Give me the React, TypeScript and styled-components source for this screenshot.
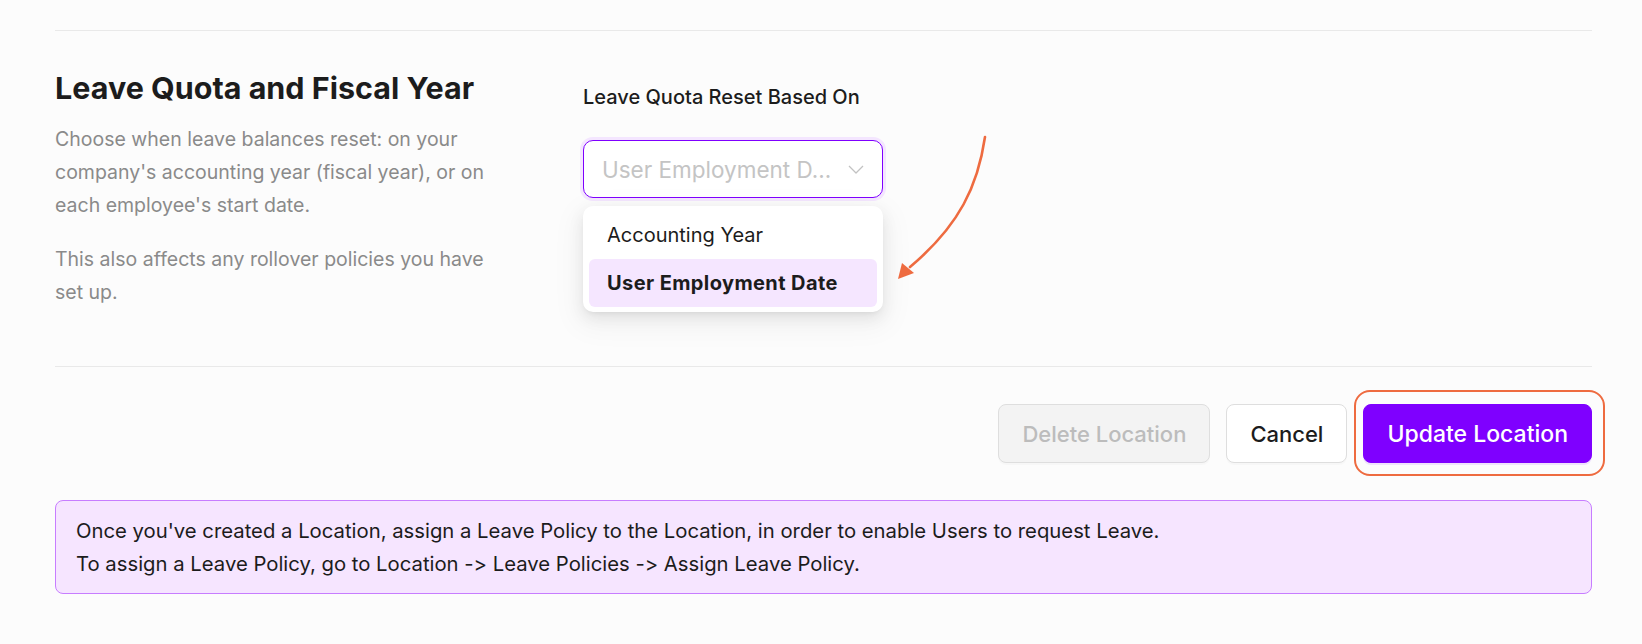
import React from 'react'
import styled, { createGlobalStyle } from 'styled-components'

const GlobalStyle = createGlobalStyle`
  body {
    margin: 0;
    background: #fcfcfc;
    font-family: Inter, 'Noto Sans', sans-serif;
    font-feature-settings: 'calt' 0, 'liga' 0;
    color: #1c1c1c;
  }
`

const ChevronDown = () => (
  <svg width='16' height='9' viewBox='0 0 16 9' fill='none'>
    <path d='M1 1 L8 8 L15 1' stroke='#c2c2c2' strokeWidth='1.3' strokeLinejoin='round' />
  </svg>
)

const CurvedArrow = () => (
  <Svg_Arrow width='110' height='165' viewBox='0 0 110 165' fill='none'>
    <path d='M102 11 C95 59 77 99 27 141' stroke='#ee6b40' strokeWidth='2.6' strokeLinecap='round' />
    <polygon points='15,153 19,137 31,147' fill='#ee6b40' />
  </Svg_Arrow>
)

export default function App() {
  return (
    <>
      <GlobalStyle />
      <Div_Page>
        <Hr_Divider />
        <Section_Row>
          <div>
            <H2_Title>Leave Quota and Fiscal Year</H2_Title>
            <P_Description>
              Choose when leave balances reset: on your company's accounting year (fiscal year), or on
              each employee's start date.
            </P_Description>
            <P_Description>This also affects any rollover policies you have set up.</P_Description>
          </div>
          <Div_Field>
            <Label_Field>Leave Quota Reset Based On</Label_Field>
            <Div_Select>
              <Span_Placeholder>User Employment D...</Span_Placeholder>
              <ChevronDown />
            </Div_Select>
            <Ul_Menu>
              <Li_Option>Accounting Year</Li_Option>
              <Li_Option selected>User Employment Date</Li_Option>
            </Ul_Menu>
            <CurvedArrow />
          </Div_Field>
        </Section_Row>
        <Hr_Divider />
        <Div_Footer>
          <Button_Action variant='disabled'>Delete Location</Button_Action>
          <Button_Action variant='default'>Cancel</Button_Action>
          <Div_Highlight>
            <Button_Action variant='primary'>Update Location</Button_Action>
          </Div_Highlight>
        </Div_Footer>
        <Div_Notice>
          Once you've created a Location, assign a Leave Policy to the Location, in order to enable Users to
          request Leave.
          <br />
          To assign a Leave Policy, go to Location -&gt; Leave Policies -&gt; Assign Leave Policy.
        </Div_Notice>
      </Div_Page>
    </>
  )
}

const Div_Page = styled.div`
  padding: 30px 50px 0 55px;
`

const Hr_Divider = styled.hr`
  margin: 0;
  border: none;
  border-top: 1px solid #e9e9e9;
`

const Section_Row = styled.section`
  display: grid;
  grid-template-columns: 452px 1fr;
  column-gap: 76px;
  padding: 40px 0 57px;
`

const H2_Title = styled.h2`
  margin: 0;
  font-size: 30.5px;
  line-height: 34px;
  font-weight: 700;
  color: #1c1c1c;
`

const P_Description = styled.p`
  margin: 18px 0 0;
  font-size: 19.5px;
  line-height: 33px;
  color: #8a8a8a;
  & + & {
    margin-top: 21px;
  }
`

const Div_Field = styled.div`
  position: relative;
  padding-top: 14px;
`

const Label_Field = styled.label`
  display: block;
  font-size: 20px;
  line-height: 24px;
  font-weight: 500;
  color: #1c1c1c;
`

const Div_Select = styled.div`
  box-sizing: border-box;
  width: 300px;
  height: 58px;
  margin-top: 31px;
  padding: 0 18px 0 18px;
  display: flex;
  align-items: center;
  justify-content: space-between;
  background: #fff;
  border: 1px solid #7f00ff;
  border-radius: 10px;
  box-shadow: 0 0 0 3px #f4e6ff;
`

const Span_Placeholder = styled.span`
  font-size: 22.5px;
  color: #c4c4c4;
`

const Ul_Menu = styled.ul`
  position: absolute;
  top: 135px;
  left: 0;
  box-sizing: border-box;
  width: 300px;
  margin: 0;
  padding: 5px 6px;
  list-style: none;
  background: #fff;
  border-radius: 10px;
  box-shadow: 0 6px 16px rgba(0, 0, 0, 0.08), 0 3px 6px -4px rgba(0, 0, 0, 0.12), 0 9px 28px 8px rgba(0, 0, 0, 0.04);
`

const Li_Option = styled.li<{ selected?: boolean }>`
  height: 48px;
  display: flex;
  align-items: center;
  padding: 0 18px;
  border-radius: 6px;
  font-size: 20px;
  font-weight: ${p => (p.selected ? 700 : 400)};
  letter-spacing: ${p => (p.selected ? '0.4px' : '0')};
  background: ${p => (p.selected ? '#f5e6ff' : 'transparent')};
  color: #1c1c1c;
`

const Svg_Arrow = styled.svg`
  position: absolute;
  left: 300px;
  top: 55px;
`

const Div_Footer = styled.div`
  display: flex;
  justify-content: flex-end;
  align-items: center;
  gap: 16px;
  padding: 37px 0 37px;
`

const Button_Action = styled.button<{ variant: 'disabled' | 'default' | 'primary' }>`
  height: 59px;
  padding: 0 23px;
  border-radius: 8px;
  font-family: inherit;
  font-feature-settings: 'calt' 0;
  font-size: ${p => (p.variant === 'primary' ? '23px' : '22px')};
  font-weight: 500;
  cursor: pointer;
  border: 1px solid
    ${p => (p.variant === 'primary' ? '#7f00ff' : '#dedede')};
  background: ${p => (p.variant === 'primary' ? '#7f00ff' : p.variant === 'disabled' ? '#f3f3f3' : '#fff')};
  color: ${p => (p.variant === 'primary' ? '#fff' : p.variant === 'disabled' ? '#bcbcbc' : '#1c1c1c')};
  box-shadow: ${p => (p.variant === 'primary' ? '0 2px 0 rgba(127, 0, 255, 0.1)' : '0 2px 0 rgba(0, 0, 0, 0.02)')};
`

const Div_Highlight = styled.div`
  position: relative;
  display: flex;
  &::after {
    content: '';
    position: absolute;
    top: -14px;
    bottom: -13px;
    left: -9px;
    right: -13px;
    border: 2.5px solid #ee6b40;
    border-radius: 16px;
    pointer-events: none;
  }
`

const Div_Notice = styled.div`
  padding: 13px 20px;
  background: #f6e5ff;
  border: 1px solid #c77dff;
  border-radius: 8px;
  font-size: 20.3px;
  line-height: 33px;
  color: #1c1c1c;
`
